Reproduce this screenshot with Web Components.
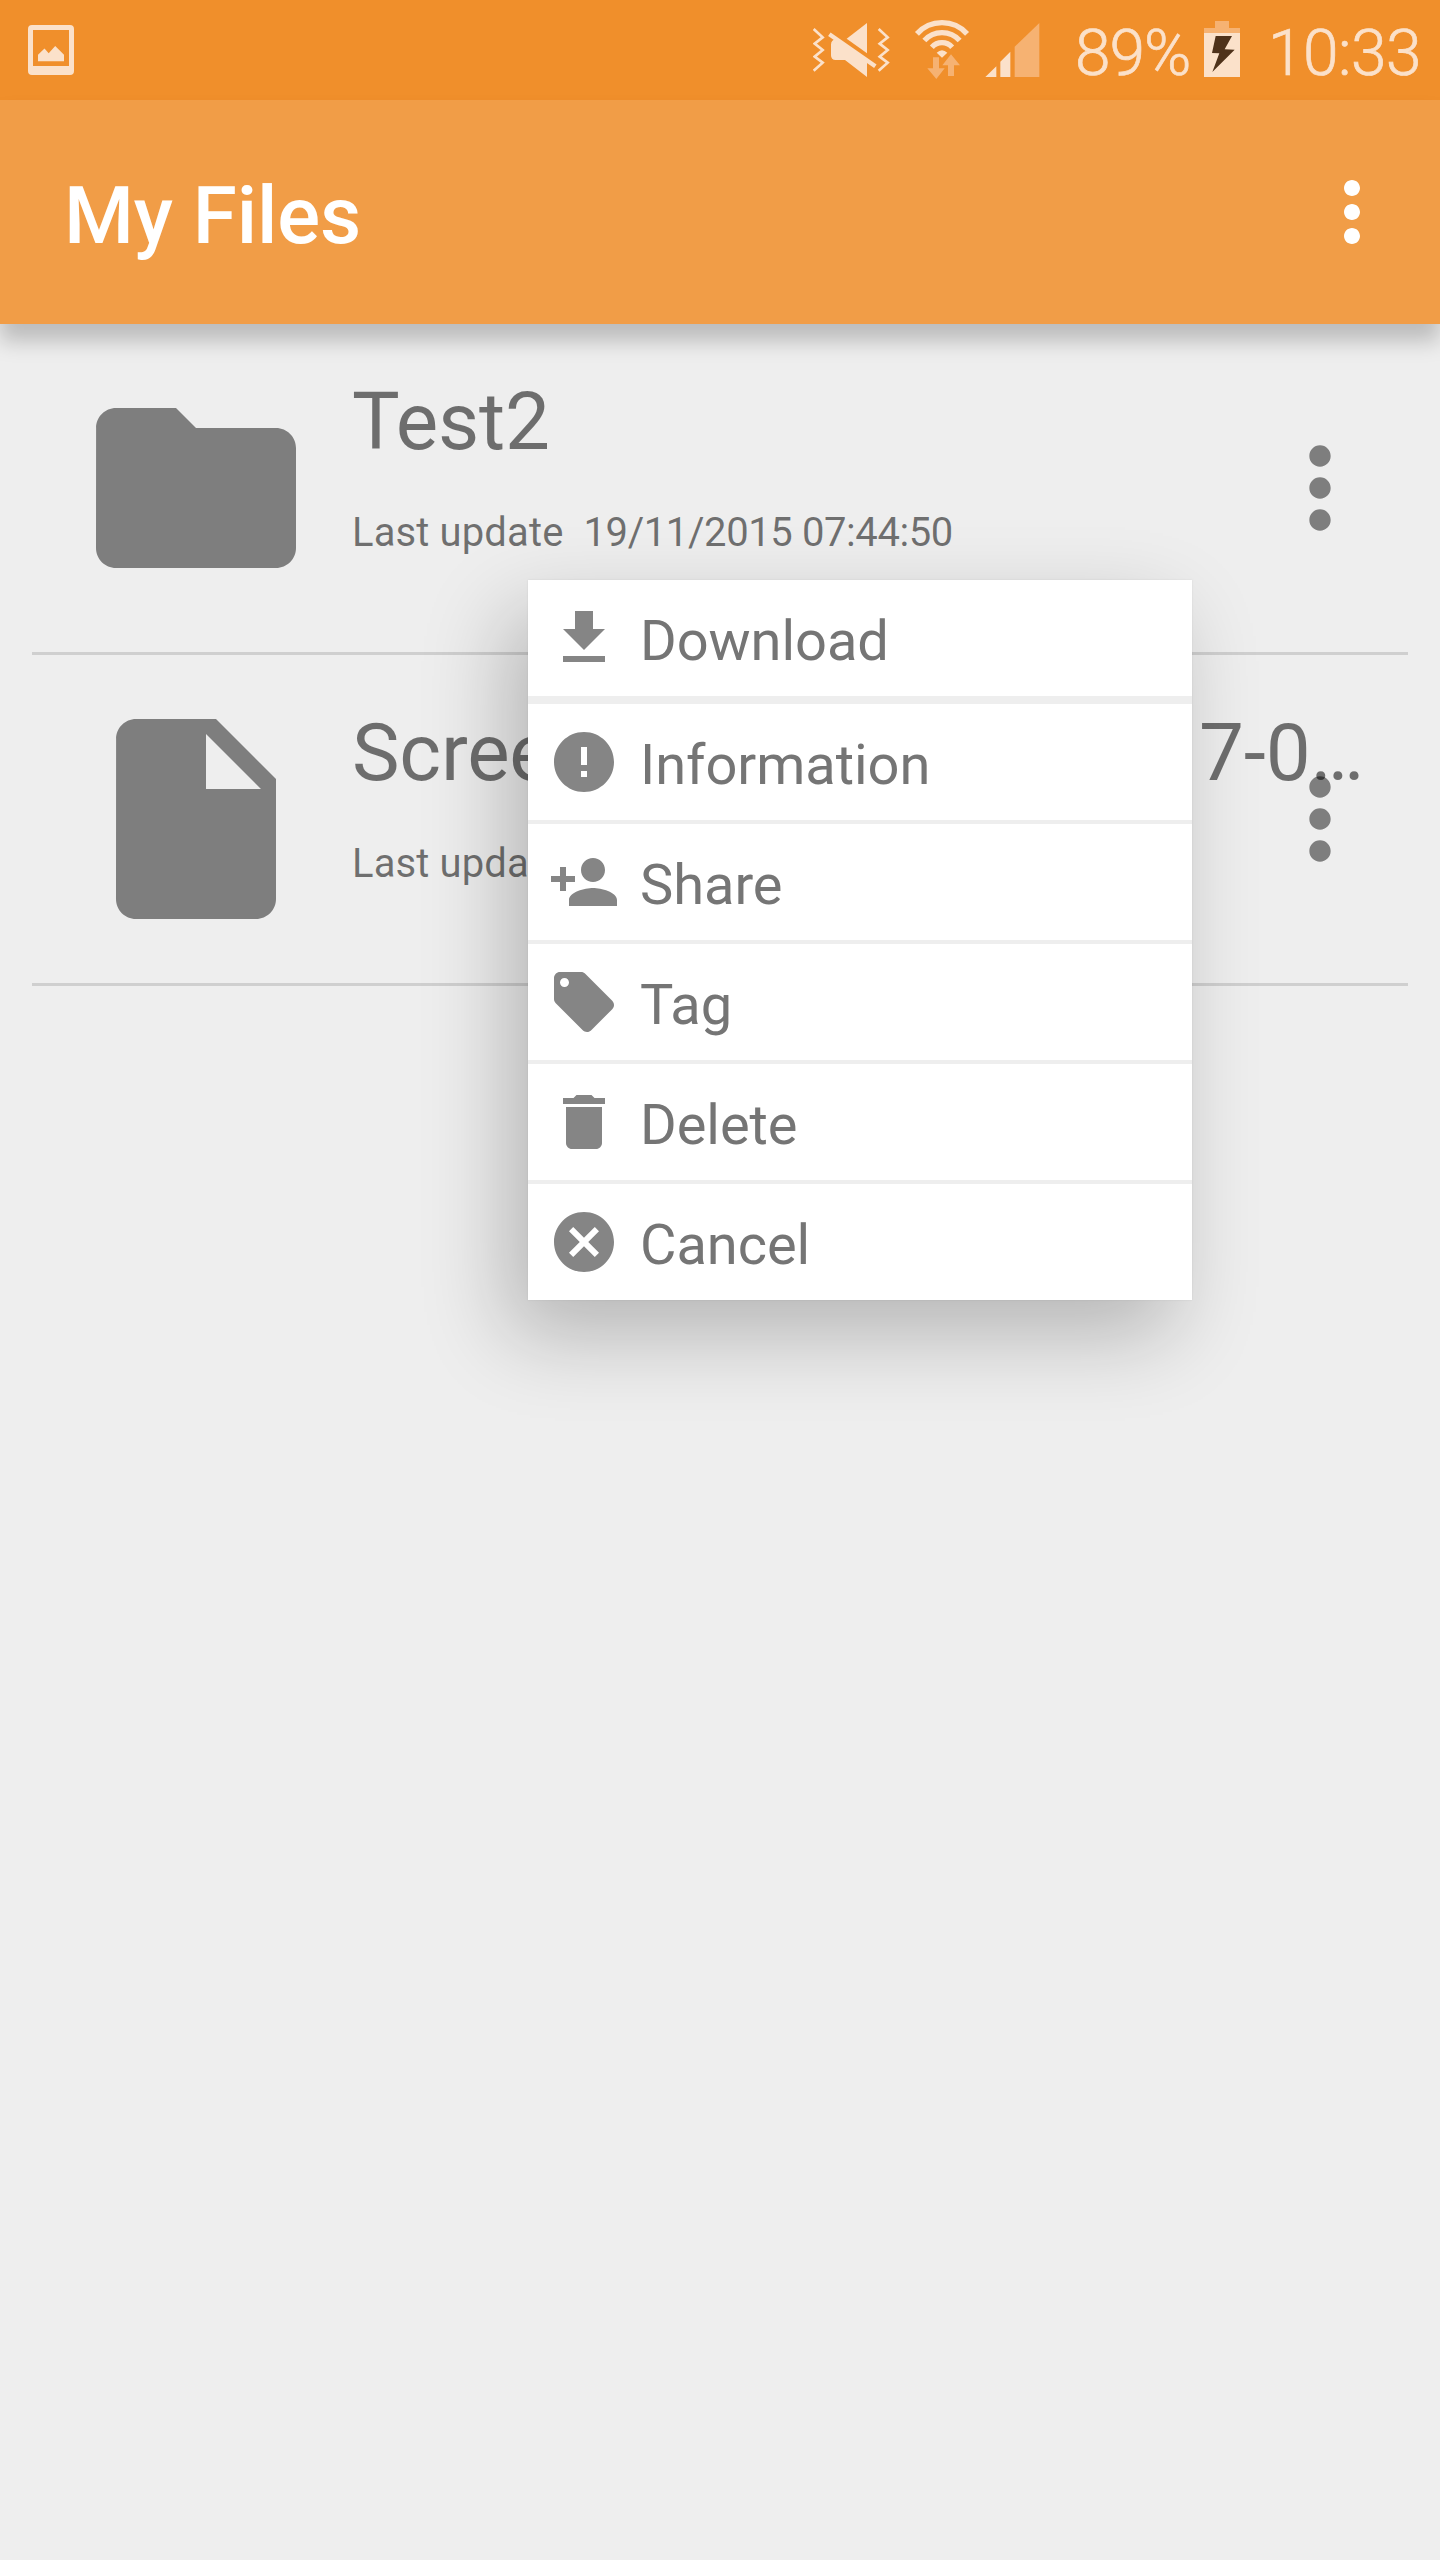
<!DOCTYPE html>
<html lang="en">
<head>
<meta charset="utf-8">
<title>My Files</title>
<style>
  html, body { margin: 0; }
  body { width: 1440px; height: 2560px; background: #eeeeee; font-family: Roboto, sans-serif; overflow: hidden; }
</style>
</head>
<body>
<files-app></files-app>
<script>
const ICONS = {
  more: 'M12 8c1.1 0 2-.9 2-2s-.9-2-2-2-2 .9-2 2 .9 2 2 2zm0 2c-1.1 0-2 .9-2 2s.9 2 2 2 2-.9 2-2-.9-2-2-2zm0 6c-1.1 0-2 .9-2 2s.9 2 2 2 2-.9 2-2-.9-2-2-2z',
  folder: 'M10 4H4c-1.1 0-1.99.9-1.99 2L2 18c0 1.1.9 2 2 2h16c1.1 0 2-.9 2-2V8c0-1.1-.9-2-2-2h-8l-2-2z',
  file: 'M6 2c-1.1 0-1.99.9-1.99 2L4 20c0 1.1.89 2 1.99 2H18c1.1 0 2-.9 2-2V8l-6-6H6zm7 7V3.5L18.5 9H13z',
  download: 'M19 9h-4V3H9v6H5l7 7 7-7zM5 18v2h14v-2H5z',
  info: 'M12 2C6.48 2 2 6.48 2 12s4.48 10 10 10 10-4.48 10-10S17.52 2 12 2zm1 15h-2v-2h2v2zm0-4h-2V7h2v6z',
  share: 'M15 12c2.21 0 4-1.79 4-4s-1.79-4-4-4-4 1.79-4 4 1.79 4 4 4zm-9-2V7H4v3H1v2h3v3h2v-3h3v-2H6zm9 4c-2.67 0-8 1.34-8 4v2h16v-2c0-2.66-5.33-4-8-4z',
  tag: 'M21.41 11.58l-9-9C12.05 2.22 11.55 2 11 2H4c-1.1 0-2 .9-2 2v7c0 .55.22 1.05.59 1.42l9 9c.36.36.86.58 1.41.58.55 0 1.05-.22 1.41-.59l7-7c.37-.36.59-.86.59-1.41 0-.55-.23-1.06-.59-1.42zM5.5 7C4.67 7 4 6.33 4 5.5S4.67 4 5.5 4 7 4.67 7 5.5 6.33 7 5.5 7z',
  delete: 'M6 19c0 1.1.9 2 2 2h8c1.1 0 2-.9 2-2V7H6v12zM19 4h-3.5l-1-1h-5l-1 1H5v2h14V4z',
  cancel: 'M12 2C6.47 2 2 6.47 2 12s4.47 10 10 10 10-4.47 10-10S17.53 2 12 2zm5 13.59L15.59 17 12 13.41 8.41 17 7 15.59 10.59 12 7 8.41 8.41 7 12 10.59 15.59 7 17 8.41 13.41 12 17 15.59z'
};

class Base extends HTMLElement {
  connectedCallback() {
    if (!this.shadowRoot) this.attachShadow({ mode: 'open' }).innerHTML = this.render();
  }
}

/* Square glyph on a 24-unit grid, filled with the current colour. */
customElements.define('md-icon', class extends Base {
  render() {
    const s = this.getAttribute('size');
    return `<style>:host{display:block;flex:none;width:${s}px;height:${s}px}svg{display:block}</style>
      <svg width="${s}" height="${s}" viewBox="0 0 24 24" fill="currentColor"><path d="${ICONS[this.getAttribute('name')]}"/></svg>`;
  }
});

customElements.define('status-bar', class extends Base {
  render() {
    return `<style>
      :host{display:flex;align-items:center;height:100px;background:#f08f2b;color:#fbe1ca;box-sizing:border-box;padding:0 22px 0 28px;font-weight:300;font-size:64px}
      svg{display:block;flex:none}
      .spacer{flex:1}
      .mute{margin-right:24px}
      .wifi{margin-right:15px}
      .sig{margin-right:35px}
      .pct,.time{flex:none;padding-top:6px;white-space:nowrap;-webkit-text-stroke:.7px currentColor}
      .pct{width:129px;letter-spacing:-1px}
      .bat{margin-right:28px}
      .time{width:150px;letter-spacing:-.5px}
    </style>
    <svg width="46" height="100" viewBox="28 0 46 100" fill="currentColor">
      <path fill-rule="evenodd" d="M32 25h38a4 4 0 0 1 4 4v42a4 4 0 0 1-4 4H32a4 4 0 0 1-4-4V29a4 4 0 0 1 4-4zM33 30v36h36V30z"/>
      <path d="M38 54.8L44.5 48.5 48.7 53.2 55.2 46 64 54.8V61.3H38z"/>
    </svg>
    <span class="spacer"></span>
    <svg class="mute" width="77" height="100" viewBox="69 0 231 300" fill="currentColor">
      <g fill="none" stroke="currentColor" stroke-width="8">
        <path d="M71 87L98 112 74 131 98 150 74 170 98 188 71 212"/>
        <path d="M266 87L293 112 269 131 293 150 269 170 293 188 266 212"/>
        <path d="M118 103L256 199" stroke-width="13"/>
      </g>
      <path d="M231 69V160L170 116z"/>
      <path d="M137 118Q123 120 123 134V166Q123 180 137 180H165L231 231V182z"/>
    </svg>
    <svg class="wifi" width="56" height="100" viewBox="373 0 168 300">
      <g fill="none" stroke="#fbe1ca" stroke-width="16">
        <path d="M381.8 101.6A101 101 0 0 1 532.2 101.6"/>
        <path d="M404.1 121.6A71 71 0 0 1 509.9 121.6"/>
        <path d="M426.5 141.7A41 41 0 0 1 487.5 141.7"/>
      </g>
      <path fill="#fbe1ca" d="M441 158Q457 143 473 158L457 173z"/>
      <path fill="#f6b272" d="M430 172h18v33h17L440 237 413 205h17zM484 163L511 196H493v32H475V196H458z"/>
    </svg>
    <svg class="sig" width="55" height="100" viewBox="584 0 165 300">
      <path fill="#fbe1ca" d="M585 231L618 199V231zM630 231V185L660 155V231z"/>
      <path fill="#f6b272" d="M673 231V140L747 69V231z"/>
    </svg>
    <span class="pct">89%</span>
    <svg class="bat" width="36" height="100" viewBox="462 0 108 300">
      <path fill="#f6b272" d="M495 63h42v21h33v15H462V84h33z"/>
      <path fill="#fbe1ca" d="M462 99h108v132H462z"/>
      <path fill="#4f321a" d="M497 108H546L524 148 554 149 487 216 508 160 486 159z"/>
    </svg>
    <span class="time">10:33</span>`;
  }
});

customElements.define('app-bar', class extends Base {
  render() {
    return `<style>
      :host{display:flex;align-items:center;justify-content:space-between;height:224px;box-sizing:border-box;padding:0 40px 0 64px;background:#f19d47;color:#fff;box-shadow:0 17px 20px rgba(0,0,0,.21);position:relative}
      h1{margin:0;padding-top:8px;font-weight:500;font-size:80px;line-height:96px;letter-spacing:-.1px}
    </style><h1><slot></slot></h1><md-icon name="more" size="96"></md-icon>`;
  }
});

customElements.define('file-row', class extends Base {
  render() {
    return `<style>
      :host{display:flex;height:328px;margin:0 32px;padding:0 0 0 44px;border-bottom:3px solid #cfcfcf;align-items:center;gap:36px;color:rgba(0,0,0,.47)}
      .body{flex:1;height:328px;display:grid;grid-template-columns:minmax(0,1fr);align-items:center}
      .text,.more{grid-area:1/1}
      .text{align-self:start;padding-top:50px;color:rgba(0,0,0,.54);white-space:nowrap}
      .name{font-size:80px;line-height:96px;letter-spacing:-.2px}
      .meta{display:flex;gap:20px;margin-top:39px;font-size:40px;line-height:48px}
      .meta span:first-child{letter-spacing:.13px}
      .meta span:last-child{letter-spacing:-.4px}
      .more{justify-self:end;margin-right:24px}
    </style>
    <md-icon name="${this.getAttribute('icon')}" size="240"></md-icon>
    <div class="body">
      <div class="text">
        <div class="name"><slot></slot></div>
        <div class="meta"><span>Last update</span><span>${this.getAttribute('date')}</span></div>
      </div>
      <md-icon class="more" name="more" size="128"></md-icon>
    </div>`;
  }
});

customElements.define('menu-item', class extends Base {
  render() {
    return `<style>
      :host{display:flex;align-items:center;gap:20px;height:116px;padding-left:20px;background:#fff;color:#757575;font-size:56px}
      md-icon{color:#858585}
      span{padding-top:5px;letter-spacing:-.05px}
    </style><md-icon name="${this.getAttribute('icon')}" size="72"></md-icon><span><slot></slot></span>`;
  }
});

customElements.define('popup-menu', class extends Base {
  render() {
    return `<style>
      :host{position:absolute;left:528px;top:580px;width:664px;display:flex;flex-direction:column;gap:4px;background:#eeeeee;box-shadow:0 0 2px rgba(0,0,0,.08),-20px 34px 80px rgba(0,0,0,.245)}
      ::slotted(:first-child){margin-bottom:4px}
    </style><slot></slot>`;
  }
});

customElements.define('files-app', class extends Base {
  render() {
    return `<style>:host{display:block;position:relative;height:2560px}.wide{letter-spacing:3.4px}</style>
    <status-bar></status-bar>
    <app-bar>My Files</app-bar>
    <file-row icon="folder" date="19/11/2015 07:44:50">Test2</file-row>
    <file-row icon="file" date="19/11/2015 07:44:50">Scree<span class="wide">nshot_2015-11-1</span>7-0…</file-row>
    <popup-menu>
      <menu-item icon="download">Download</menu-item>
      <menu-item icon="info">Information</menu-item>
      <menu-item icon="share">Share</menu-item>
      <menu-item icon="tag">Tag</menu-item>
      <menu-item icon="delete">Delete</menu-item>
      <menu-item icon="cancel">Cancel</menu-item>
    </popup-menu>`;
  }
});
</script>
</body>
</html>
